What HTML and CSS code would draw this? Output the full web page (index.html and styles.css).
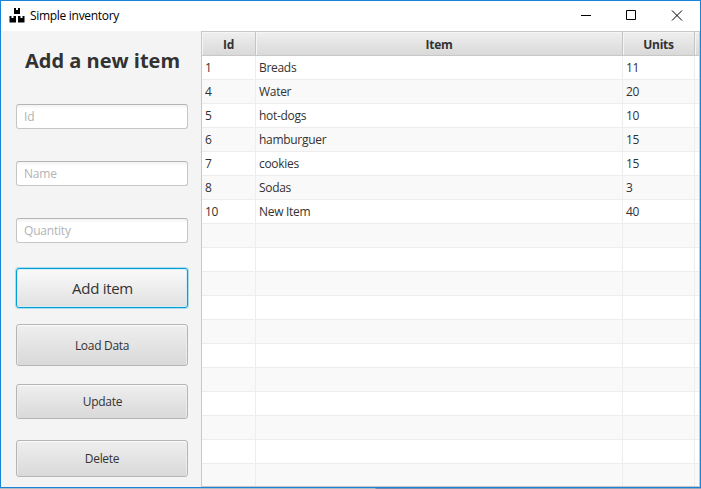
FILE: index.html
```html
<!DOCTYPE html>
<html lang="en">
<head>
<meta charset="utf-8">
<title>Simple inventory</title>
<link rel="stylesheet" href="styles.css">
</head>
<body>
<div class="window">
  <header class="titlebar">
    <svg class="logo" width="16" height="16" viewBox="0 0 16 16"><path d="M5 0h2v2h2V0h2v6H5zM.5 8h2v2h2V8h2.500v6.500H.5zM9 8h2.500v2h2V8h2v6.500H9z"/></svg>
    <span class="caption">Simple inventory</span>
    <svg class="controls" width="138" height="30" viewBox="0 0 138 30" fill="none" stroke="#000"><path d="M19 14.500h10M64.500 9.500h9v9h-9zM110 9.500l10 10M120 9.500l-10 10"/></svg>
  </header>
  <main class="content">
    <section class="form">
      <h1>Add a new item</h1>
      <input class="field" type="text" placeholder="Id">
      <input class="field" type="text" placeholder="Name">
      <input class="field" type="text" placeholder="Quantity">
      <button class="btn add">Add item</button>
      <button class="btn load">Load Data</button>
      <button class="btn update">Update</button>
      <button class="btn delete">Delete</button>
    </section>
    <section class="table">
      <div class="row head"><span>Id</span><span>Item</span><span>Units</span><span></span></div>
      <div class="row"><span>1</span><span>Breads</span><span>11</span><span></span></div>
      <div class="row"><span>4</span><span>Water</span><span>20</span><span></span></div>
      <div class="row"><span>5</span><span>hot-dogs</span><span>10</span><span></span></div>
      <div class="row"><span>6</span><span>hamburguer</span><span>15</span><span></span></div>
      <div class="row"><span>7</span><span>cookies</span><span>15</span><span></span></div>
      <div class="row"><span>8</span><span>Sodas</span><span>3</span><span></span></div>
      <div class="row"><span>10</span><span>New Item</span><span>40</span><span></span></div>
      <div class="row"><span></span><span></span><span></span><span></span></div>
      <div class="row"><span></span><span></span><span></span><span></span></div>
      <div class="row"><span></span><span></span><span></span><span></span></div>
      <div class="row"><span></span><span></span><span></span><span></span></div>
      <div class="row"><span></span><span></span><span></span><span></span></div>
      <div class="row"><span></span><span></span><span></span><span></span></div>
      <div class="row"><span></span><span></span><span></span><span></span></div>
      <div class="row"><span></span><span></span><span></span><span></span></div>
      <div class="row"><span></span><span></span><span></span><span></span></div>
      <div class="row"><span></span><span></span><span></span><span></span></div>
      <div class="row"><span></span><span></span><span></span><span></span></div>
    </section>
  </main>
</div>
</body>
</html>
```
FILE: styles.css
```css
* { box-sizing: border-box; }
body {
  margin: 0;
  height: 489px;
  overflow: hidden;
  background: linear-gradient(90deg, #b5bbc2 375px, #7888aa 376px, #9fa6b5 701px);
  font: 12px/16px "Open Sans", "Noto Sans", sans-serif;
  letter-spacing: -0.3px;
  color: #323232;
}
.window {
  display: flex;
  flex-direction: column;
  height: 488px;
  border: 1px solid #1883d7;
  background: #f4f4f4;
}
.titlebar {
  display: flex;
  align-items: center;
  height: 30px;
  padding-left: 8px;
  background: #fff;
  color: #000;
}
.caption { margin-left: 5px; }
.controls { margin-left: auto; }
.content { display: flex; flex: 1; min-height: 0; }
.form {
  display: flex;
  flex-direction: column;
  width: 200px;
  padding: 15px 13px 0 15px;
}
h1 {
  margin: 0 0 28px;
  padding-left: 1px;
  font-size: 20px;
  line-height: 30px;
  letter-spacing: 0;
  text-align: center;
  white-space: nowrap;
}
.field {
  width: 172px;
  height: 25px;
  flex: none;
  margin: 0 0 32px;
  padding: 0 7px;
  border: 1px solid #c6c6c6;
  border-top-color: #b5b5b5;
  border-radius: 3px;
  background: linear-gradient(#f2f2f2, #fff 4px);
  font: inherit;
  letter-spacing: -0.2px;
}
.field::placeholder { color: #b3b3b3; opacity: 1; }
.btn {
  width: 172px;
  flex: none;
  padding: 0;
  border: 1px solid #b5b5b5;
  border-radius: 3px;
  background: linear-gradient(#efefef, #d9d9d9);
  box-shadow: inset 0 1px #fbfbfb, inset 1px 0 #ececec, inset -1px 0 #ececec;
  color: #333;
  font: inherit;
  letter-spacing: inherit;
}
.add {
  height: 40px;
  margin: -7px 0 16px;
  padding-left: 1px;
  border-color: #039ed3;
  background: linear-gradient(#fafafa, #e1e1e1);
  box-shadow: 0 0 0 1px #a9dced, inset 0 0 0 1px #d5edf5;
  font-size: 15px;
}
.load { height: 42px; margin-bottom: 18px; padding-top: 2px; }
.update { height: 35px; margin-bottom: 21px; padding-left: 1px; }
.delete { height: 37px; }
.table {
  flex: 1;
  overflow: hidden;
  border: 1px solid #c8c8c8;
  background: #fff;
}
.row {
  display: grid;
  grid-template-columns: 54px 367px 72px 1fr;
  height: 24px;
  border-bottom: 1px solid #ededed;
  background: #fff;
}
.row:nth-child(odd) { background: #f9f9f9; }
.row span {
  padding-left: 3px;
  border-right: 1px solid #ededed;
  line-height: 24px;
}
.row span:last-child { border-right: 0; }
.row.head {
  border-bottom-color: #c8c8c8;
  background: linear-gradient(#efefef, #d9d9d9);
  font-weight: bold;
}
.head span {
  padding: 1px 0 0;
  height: 23px;
  border-color: #c4c4c4;
  box-shadow: inset 1px 1px #f5f5f5;
  text-align: center;
}
```
